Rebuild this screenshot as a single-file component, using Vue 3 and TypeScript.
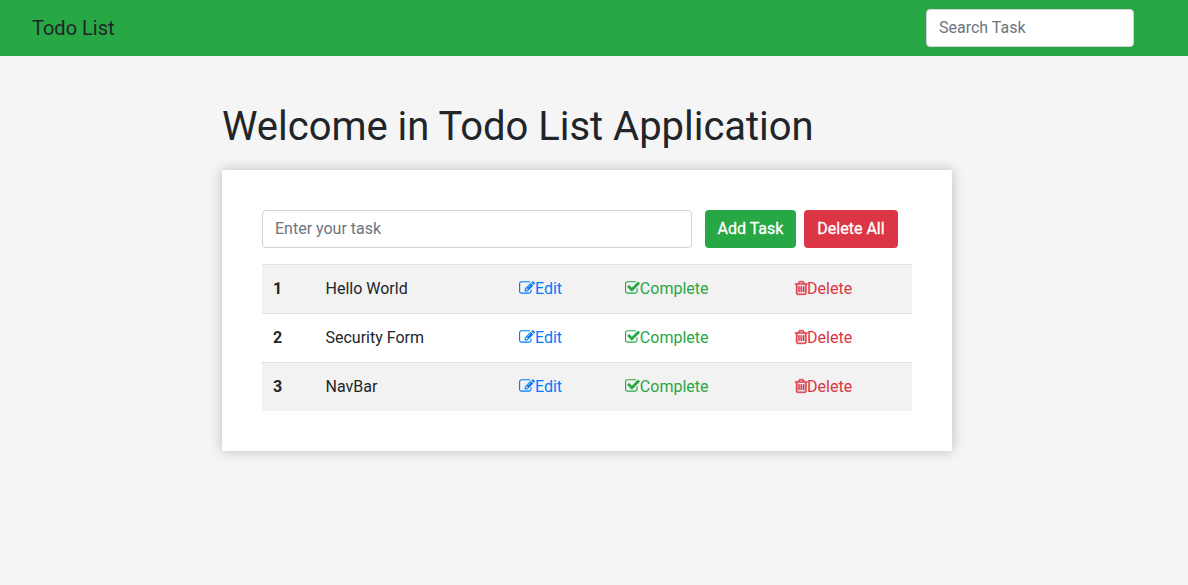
<script setup lang="ts">
import { ref } from 'vue'

interface Task {
  id: number
  title: string
}

const search = ref('')
const draft = ref('')
const tasks = ref<Task[]>([
  { id: 1, title: 'Hello World' },
  { id: 2, title: 'Security Form' },
  { id: 3, title: 'NavBar' },
])

function addTask(): void {
  const title = draft.value.trim()
  if (!title) return
  tasks.value.push({ id: tasks.value.length + 1, title })
  draft.value = ''
}
</script>

<template>
  <div class="page">
    <nav class="navbar">
      <span class="brand">Todo List</span>
      <input v-model="search" class="field search" type="text" placeholder="Search Task" />
    </nav>

    <main class="content">
      <h1>Welcome in Todo List Application</h1>
      <section class="card">
        <div class="entry">
          <input v-model="draft" class="field task-input" type="text" placeholder="Enter your task" />
          <button class="btn add" type="button" @click="addTask">Add Task</button>
          <button class="btn clear" type="button" @click="tasks = []">Delete All</button>
        </div>
        <table class="tasks">
          <colgroup>
            <col class="c-num" />
            <col class="c-title" />
            <col class="c-edit" />
            <col class="c-done" />
            <col />
          </colgroup>
          <tbody>
            <tr v-for="task in tasks" :key="task.id">
              <th>{{ task.id }}</th>
              <td>{{ task.title }}</td>
              <td class="edit">
                <svg class="icon" width="16" height="16" viewBox="0 0 1792 1792"><path d="M888 1184l116-116-152-152-116 116v56h96v96h56zm440-720q-16-16-33 1l-350 350q-17 17-1 33t33-1l350-350q17-17 1-33zm80 594v190q0 119-84.5 203.5t-203.5 84.5h-832q-119 0-203.5-84.5t-84.5-203.5v-832q0-119 84.5-203.5t203.5-84.5h832q63 0 117 25 15 7 18 23 3 17-9 29l-49 49q-14 14-32 8-23-6-45-6h-832q-66 0-113 47t-47 113v832q0 66 47 113t113 47h832q66 0 113-47t47-113v-126q0-13 9-22l64-64q15-15 35-7t20 29zm-96-738l288 288-672 672h-288v-288zm444 132l-92 92-288-288 92-92q28-28 68-28t68 28l152 152q28 28 28 68t-28 68z" /></svg>Edit
              </td>
              <td class="done">
                <svg class="icon" width="14.86" height="16" viewBox="64 0 1664 1792"><path d="M1472 930v318q0 119-84.5 203.5t-203.5 84.5h-832q-119 0-203.5-84.5t-84.5-203.5v-832q0-119 84.5-203.5t203.5-84.5h832q63 0 117 25 15 7 18 23 3 17-9 29l-49 49q-10 10-23 10-3 0-9-2-23-6-45-6h-832q-66 0-113 47t-47 113v832q0 66 47 113t113 47h832q66 0 113-47t47-113v-254q0-13 9-22l64-64q10-10 23-10 6 0 12 3 20 8 20 29zm231-489l-814 814q-24 24-57 24t-57-24l-430-430q-24-24-24-57t24-57l110-110q24-24 57-24t57 24l263 263 647-647q24-24 57-24t57 24l110 110q24 24 24 57t-24 57z" /></svg>Complete
              </td>
              <td class="remove">
                <svg class="icon trash" width="12.57" height="16" viewBox="192 0 1408 1792"><path d="M704 736v576q0 14-9 23t-23 9h-64q-14 0-23-9t-9-23v-576q0-14 9-23t23-9h64q14 0 23 9t9 23zm256 0v576q0 14-9 23t-23 9h-64q-14 0-23-9t-9-23v-576q0-14 9-23t23-9h64q14 0 23 9t9 23zm256 0v576q0 14-9 23t-23 9h-64q-14 0-23-9t-9-23v-576q0-14 9-23t23-9h64q14 0 23 9t9 23zm128 724v-948h-896v948q0 22 7 40.5t14.5 27 10.5 8.5h832q3 0 10.5-8.5t14.5-27 7-40.5zm-672-1076h448l-48-117q-7-9-17-11h-317q-10 2-17 11zm928 32v64q0 14-9 23t-23 9h-96v948q0 83-47 143.5t-113 60.5h-832q-66 0-113-58.5t-47-141.5v-952h-96q-14 0-23-9t-9-23v-64q0-14 9-23t23-9h309l70-167q15-37 54-63t79-26h320q40 0 79 26t54 63l70 167h309q14 0 23 9t9 23z" /></svg>Delete
              </td>
            </tr>
          </tbody>
        </table>
      </section>
    </main>
  </div>
</template>

<style>
body {
  margin: 0;
  background: #f5f5f5;
}
</style>

<style scoped>
.page,
.page * {
  box-sizing: border-box;
}
.page {
  min-height: 100vh;
  background: #f5f5f5;
  color: #212529;
  font: 400 16px/24px Roboto, sans-serif;
}
.navbar {
  display: flex;
  align-items: center;
  justify-content: space-between;
  height: 56px;
  padding: 0 54px 0 32px;
  background: #28a745;
}
.brand {
  font-size: 20px;
  line-height: 30px;
}
.field {
  height: 38px;
  padding: 5px 12px 7px;
  border: 1px solid #ced4da;
  border-radius: 4px;
  background: #fff;
  color: #495057;
  font: inherit;
  outline: none;
}
.field::placeholder {
  color: #6c757d;
  opacity: 1;
}
.search {
  width: 208px;
}
.content {
  width: 730px;
  margin-left: 222px;
  padding-top: 47px;
}
h1 {
  margin: 0 0 19px;
  font-size: 40px;
  font-weight: 400;
  line-height: 48px;
  letter-spacing: -0.03px;
}
.card {
  height: 281px;
  padding: 40px;
  background: #fff;
  box-shadow: 0 0 12px rgba(0, 0, 0, 0.24);
}
.entry {
  display: flex;
  margin-bottom: 16px;
}
.task-input {
  width: 430px;
  margin-right: 13px;
}
.btn {
  height: 38px;
  padding: 0;
  border: 0;
  border-radius: 4px;
  color: #fff;
  font: inherit;
  -webkit-text-stroke: 0.3px #fff;
}
.add {
  width: 91px;
  margin-right: 8px;
  background: #28a745;
}
.clear {
  width: 94px;
  background: #dc3545;
}
.tasks {
  width: 100%;
  table-layout: fixed;
  border-collapse: separate;
  border-spacing: 0;
}
.c-num {
  width: 51.5px;
}
.c-title {
  width: 193.5px;
}
.c-edit {
  width: 106px;
}
.c-done {
  width: 169.5px;
}
th,
td {
  height: 49px;
  padding: 12px;
  border-top: 1px solid #dee2e6;
  text-align: left;
  white-space: nowrap;
}
th {
  padding-left: 11px;
  font-weight: 700;
}
tr:nth-child(odd) {
  background: #f2f2f2;
}
.edit {
  color: #007bff;
}
.done {
  color: #28a745;
}
.remove {
  color: #dc3545;
}
.icon {
  fill: currentColor;
  vertical-align: -2px;
  overflow: visible;
}
.trash {
  stroke: currentColor;
  stroke-width: 50;
}
</style>
